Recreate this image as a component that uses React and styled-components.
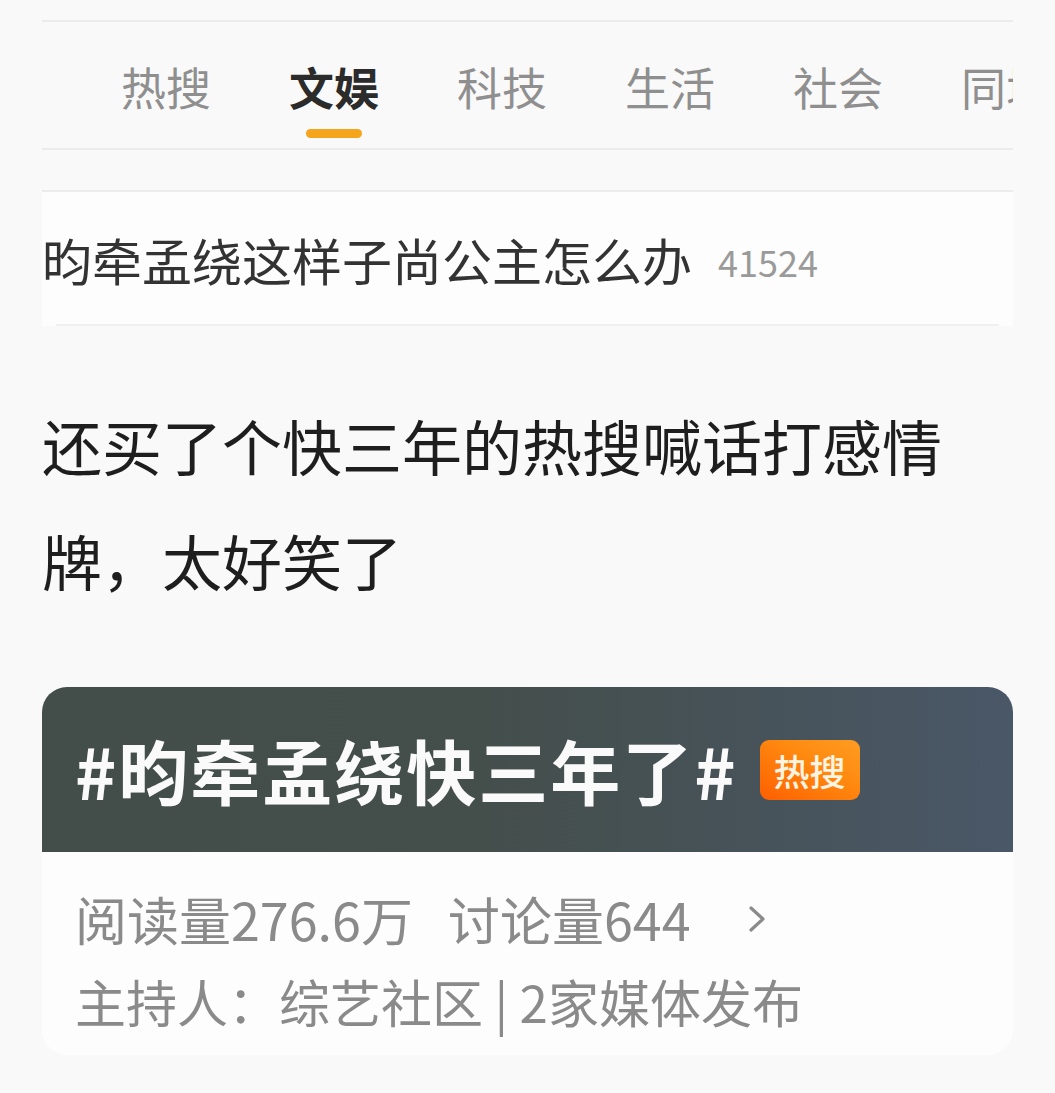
import React from "react";
import styled, { createGlobalStyle } from "styled-components";

const GlobalStyle = createGlobalStyle`
  html, body {
    margin: 0;
    padding: 0;
    background: #f9f9f9;
  }
  body {
    font-family: "Noto Sans CJK SC", "Noto Sans", sans-serif;
    -webkit-font-smoothing: antialiased;
  }
`;

const Page = styled.div`
  width: 1055px;
  height: 1093px;
  box-sizing: border-box;
  padding: 20px 42px 0;
  overflow: hidden;
`;

const Rule = styled.div`
  height: 2px;
  background: ${({ tone }) => tone || "#ececec"};
`;

const TabBar = styled.div`
  display: flex;
  gap: 78px;
  padding: 42px 0 0 79px;
  height: 126px;
  box-sizing: border-box;
  overflow: hidden;
  white-space: nowrap;
`;

const Tab = styled.div`
  display: flex;
  flex-direction: column;
  align-items: center;
  flex-shrink: 0;
`;

const TabLabel = styled.span`
  font-size: 45px;
  line-height: 45px;
  font-weight: ${({ active }) => (active ? 700 : 400)};
  color: ${({ active }) => (active ? "#2b2b2b" : "#8f8f8f")};
`;

const Indicator = styled.div`
  margin-top: 20px;
  width: 56px;
  height: 9px;
  border-radius: 5px;
  background: ${({ show }) => (show ? "#f5a51c" : "transparent")};
`;

const Gap = styled.div`
  height: ${({ h }) => h}px;
`;

const TopicCard = styled.div`
  background: #fdfdfd;
  border-top: 2px solid #ececec;
  height: 136px;
  box-sizing: border-box;
  display: flex;
  align-items: center;
  gap: 26px;
  position: relative;
  &:after {
    content: "";
    position: absolute;
    left: 14px;
    right: 14px;
    bottom: 0;
    height: 2px;
    background: #f0f0f0;
  }
`;

const TopicTitle = styled.span`
  font-size: 50px;
  line-height: 1;
  color: #333;
`;

const TopicCount = styled.span`
  font-size: 36px;
  line-height: 1;
  color: #9a9a9a;
  margin-top: 4px;
`;

const Body = styled.p`
  margin: 61px 0 70px;
  font-size: 60px;
  line-height: 115px;
  color: #1e1e1e;
  width: 920px;
`;

const HashCard = styled.div`
  border-radius: 25px;
  overflow: hidden;
  background: #fdfdfd;
  height: 368px;
`;

const HashHead = styled.div`
  height: 165px;
  background: linear-gradient(90deg, #434d49 0%, #444e4b 45%, #4a5767 100%);
  display: flex;
  align-items: center;
  padding: 0 0 0 33px;
  gap: 22px;
`;

const HashTitle = styled.span`
  font-size: 70px;
  line-height: 1;
  font-weight: 700;
  color: #fafafa;
  letter-spacing: 2px;
`;

const HotBadge = styled.span`
  width: 100px;
  height: 60px;
  border-radius: 9px;
  background: linear-gradient(30deg, #ff5f00 0%, #ff8a10 60%, #ff9c22 100%);
  color: #fff4e2;
  font-size: 36px;
  font-weight: 500;
  display: flex;
  align-items: center;
  justify-content: center;
`;

const HashFoot = styled.div`
  padding: 36px 33px 0;
  display: flex;
  flex-direction: column;
  gap: 20px;
`;

const StatLine = styled.div`
  display: flex;
  align-items: center;
  font-size: ${({ size }) => size || 52}px;
  line-height: 62px;
  color: #8a8a8a;
  white-space: nowrap;
`;

const Stat = styled.span`
  margin-right: ${({ space }) => space || 0}px;
`;

const Chevron = () => (
  <svg width="20" height="30" viewBox="0 0 20 30">
    <polyline
      points="4,4 16,15 4,26"
      fill="none"
      stroke="#8a8a8a"
      strokeWidth="3.2"
      strokeLinecap="round"
      strokeLinejoin="round"
    />
  </svg>
);

const tabs = ["热搜", "文娱", "科技", "生活", "社会", "同城"];

export default function App() {
  return (
    <Page>
      <GlobalStyle />
      <Rule />
      <TabBar>
        {tabs.map((t) => (
          <Tab key={t}>
            <TabLabel active={t === "文娱"}>{t}</TabLabel>
            <Indicator show={t === "文娱"} />
          </Tab>
        ))}
      </TabBar>
      <Rule />
      <Gap h={40} />
      <TopicCard>
        <TopicTitle>昀牵孟绕这样子尚公主怎么办</TopicTitle>
        <TopicCount>41524</TopicCount>
      </TopicCard>
      <Body>还买了个快三年的热搜喊话打感情牌，太好笑了</Body>
      <HashCard>
        <HashHead>
          <HashTitle>#昀牵孟绕快三年了#</HashTitle>
          <HotBadge>热搜</HotBadge>
        </HashHead>
        <HashFoot>
          <StatLine>
            <Stat space={35}>阅读量276.6万</Stat>
            <Stat space={56}>讨论量644</Stat>
            <Chevron />
          </StatLine>
          <StatLine size={51}>主持人：综艺社区 | 2家媒体发布</StatLine>
        </HashFoot>
      </HashCard>
    </Page>
  );
}
